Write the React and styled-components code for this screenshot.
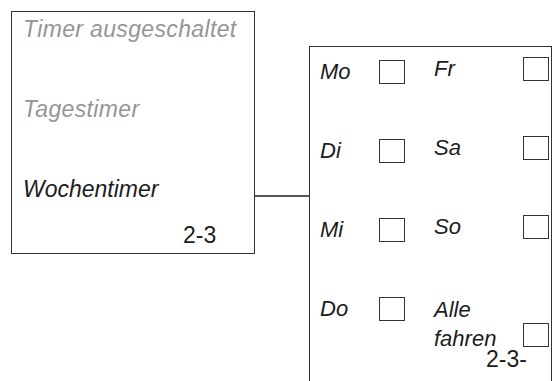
import React from "react"
import styled, { createGlobalStyle } from "styled-components"

const GlobalStyle = createGlobalStyle`
    html, body {
        margin: 0;
        padding: 0;
        background: #fff;
        overflow: hidden;
    }
    body {
        font-family: "Liberation Sans", Arial, sans-serif;
    }
`

const Page = styled.div`
    display: flex;
    align-items: flex-start;
    width: 555px;
    height: 381px;
    padding: 11px 0 0 11px;
    box-sizing: border-box;
    overflow: hidden;
`

const ModePanel = styled.div`
    display: flex;
    flex-direction: column;
    align-items: flex-start;
    gap: 54px;
    width: 244px;
    height: 243px;
    padding: 4px 0 0 11px;
    box-sizing: border-box;
    border: 1px solid #333;
    flex-shrink: 0;
`

const ModeOption = styled.div`
    font-style: italic;
    font-size: 23px;
    letter-spacing: ${({ active }) => (active ? "0" : "0.35px")};
    line-height: 26px;
    height: 26px;
    color: ${({ active }) => (active ? "#1c1c1c" : "#959595")};
    white-space: nowrap;
`

const PageRef = styled.div`
    font-size: 23px;
    line-height: 26px;
    color: #1c1c1c;
    white-space: nowrap;
    margin-top: ${({ top }) => top}px;
    margin-left: ${({ left }) => left}px;
`

const Connector = styled.div`
    width: 54px;
    height: 2px;
    margin-top: 184px;
    background: #555;
    flex-shrink: 0;
`

const DayPanel = styled.div`
    display: flex;
    flex-direction: column;
    gap: 30px;
    width: 243px;
    height: 400px;
    margin-top: 35px;
    padding: 0 0 0 10px;
    box-sizing: border-box;
    border: 1px solid #333;
    flex-shrink: 0;
`

const DayRow = styled.div`
    display: flex;
    align-items: center;
    height: 49px;
    gap: 29px;
`

const DayCell = styled.div`
    display: flex;
    align-items: ${({ stacked }) => (stacked ? "flex-end" : "center")};
    align-self: ${({ stacked }) => (stacked ? "flex-start" : "auto")};
    margin-top: ${({ stacked }) => (stacked ? "11px" : "0")};
    margin-bottom: ${({ lift }) => (lift ? "6px" : "0")};
`

const DayLabel = styled.div`
    width: ${({ wide }) => (wide ? "89px" : "59px")};
    font-style: italic;
    font-size: 22px;
    line-height: ${({ stacked }) => (stacked ? "29px" : "26px")};
    color: #1c1c1c;
`

const CheckBox = styled.div`
    width: 26px;
    height: 24px;
    box-sizing: border-box;
    border: 1px solid #333;
    background: #fff;
    flex-shrink: 0;
    margin-bottom: ${({ stacked }) => (stacked ? "6px" : "0")};
`

const rows = [
    ["Mo", "Fr"],
    ["Di", "Sa"],
    ["Mi", "So"],
    ["Do", null],
]

const App = () => {
    return (
        <>
            <GlobalStyle />
            <Page>
                <ModePanel>
                    <ModeOption>Timer ausgeschaltet</ModeOption>
                    <ModeOption>Tagestimer</ModeOption>
                    <ModeOption active>Wochentimer</ModeOption>
                    <PageRef top={-34} left={160}>2-3</PageRef>
                </ModePanel>

                <Connector />

                <DayPanel>
                    {rows.map(([left, right]) => (
                        <DayRow key={left}>
                            <DayCell>
                                <DayLabel>{left}</DayLabel>
                                <CheckBox />
                            </DayCell>
                            {right ? (
                                <DayCell lift>
                                    <DayLabel wide>{right}</DayLabel>
                                    <CheckBox />
                                </DayCell>
                            ) : (
                                <DayCell stacked>
                                    <DayLabel wide stacked>
                                        Alle<br />fahren
                                    </DayLabel>
                                    <CheckBox stacked />
                                </DayCell>
                            )}
                        </DayRow>
                    ))}
                    <PageRef top={-17} left={166}>2-3-</PageRef>
                </DayPanel>
            </Page>
        </>
    )
}

export default App
